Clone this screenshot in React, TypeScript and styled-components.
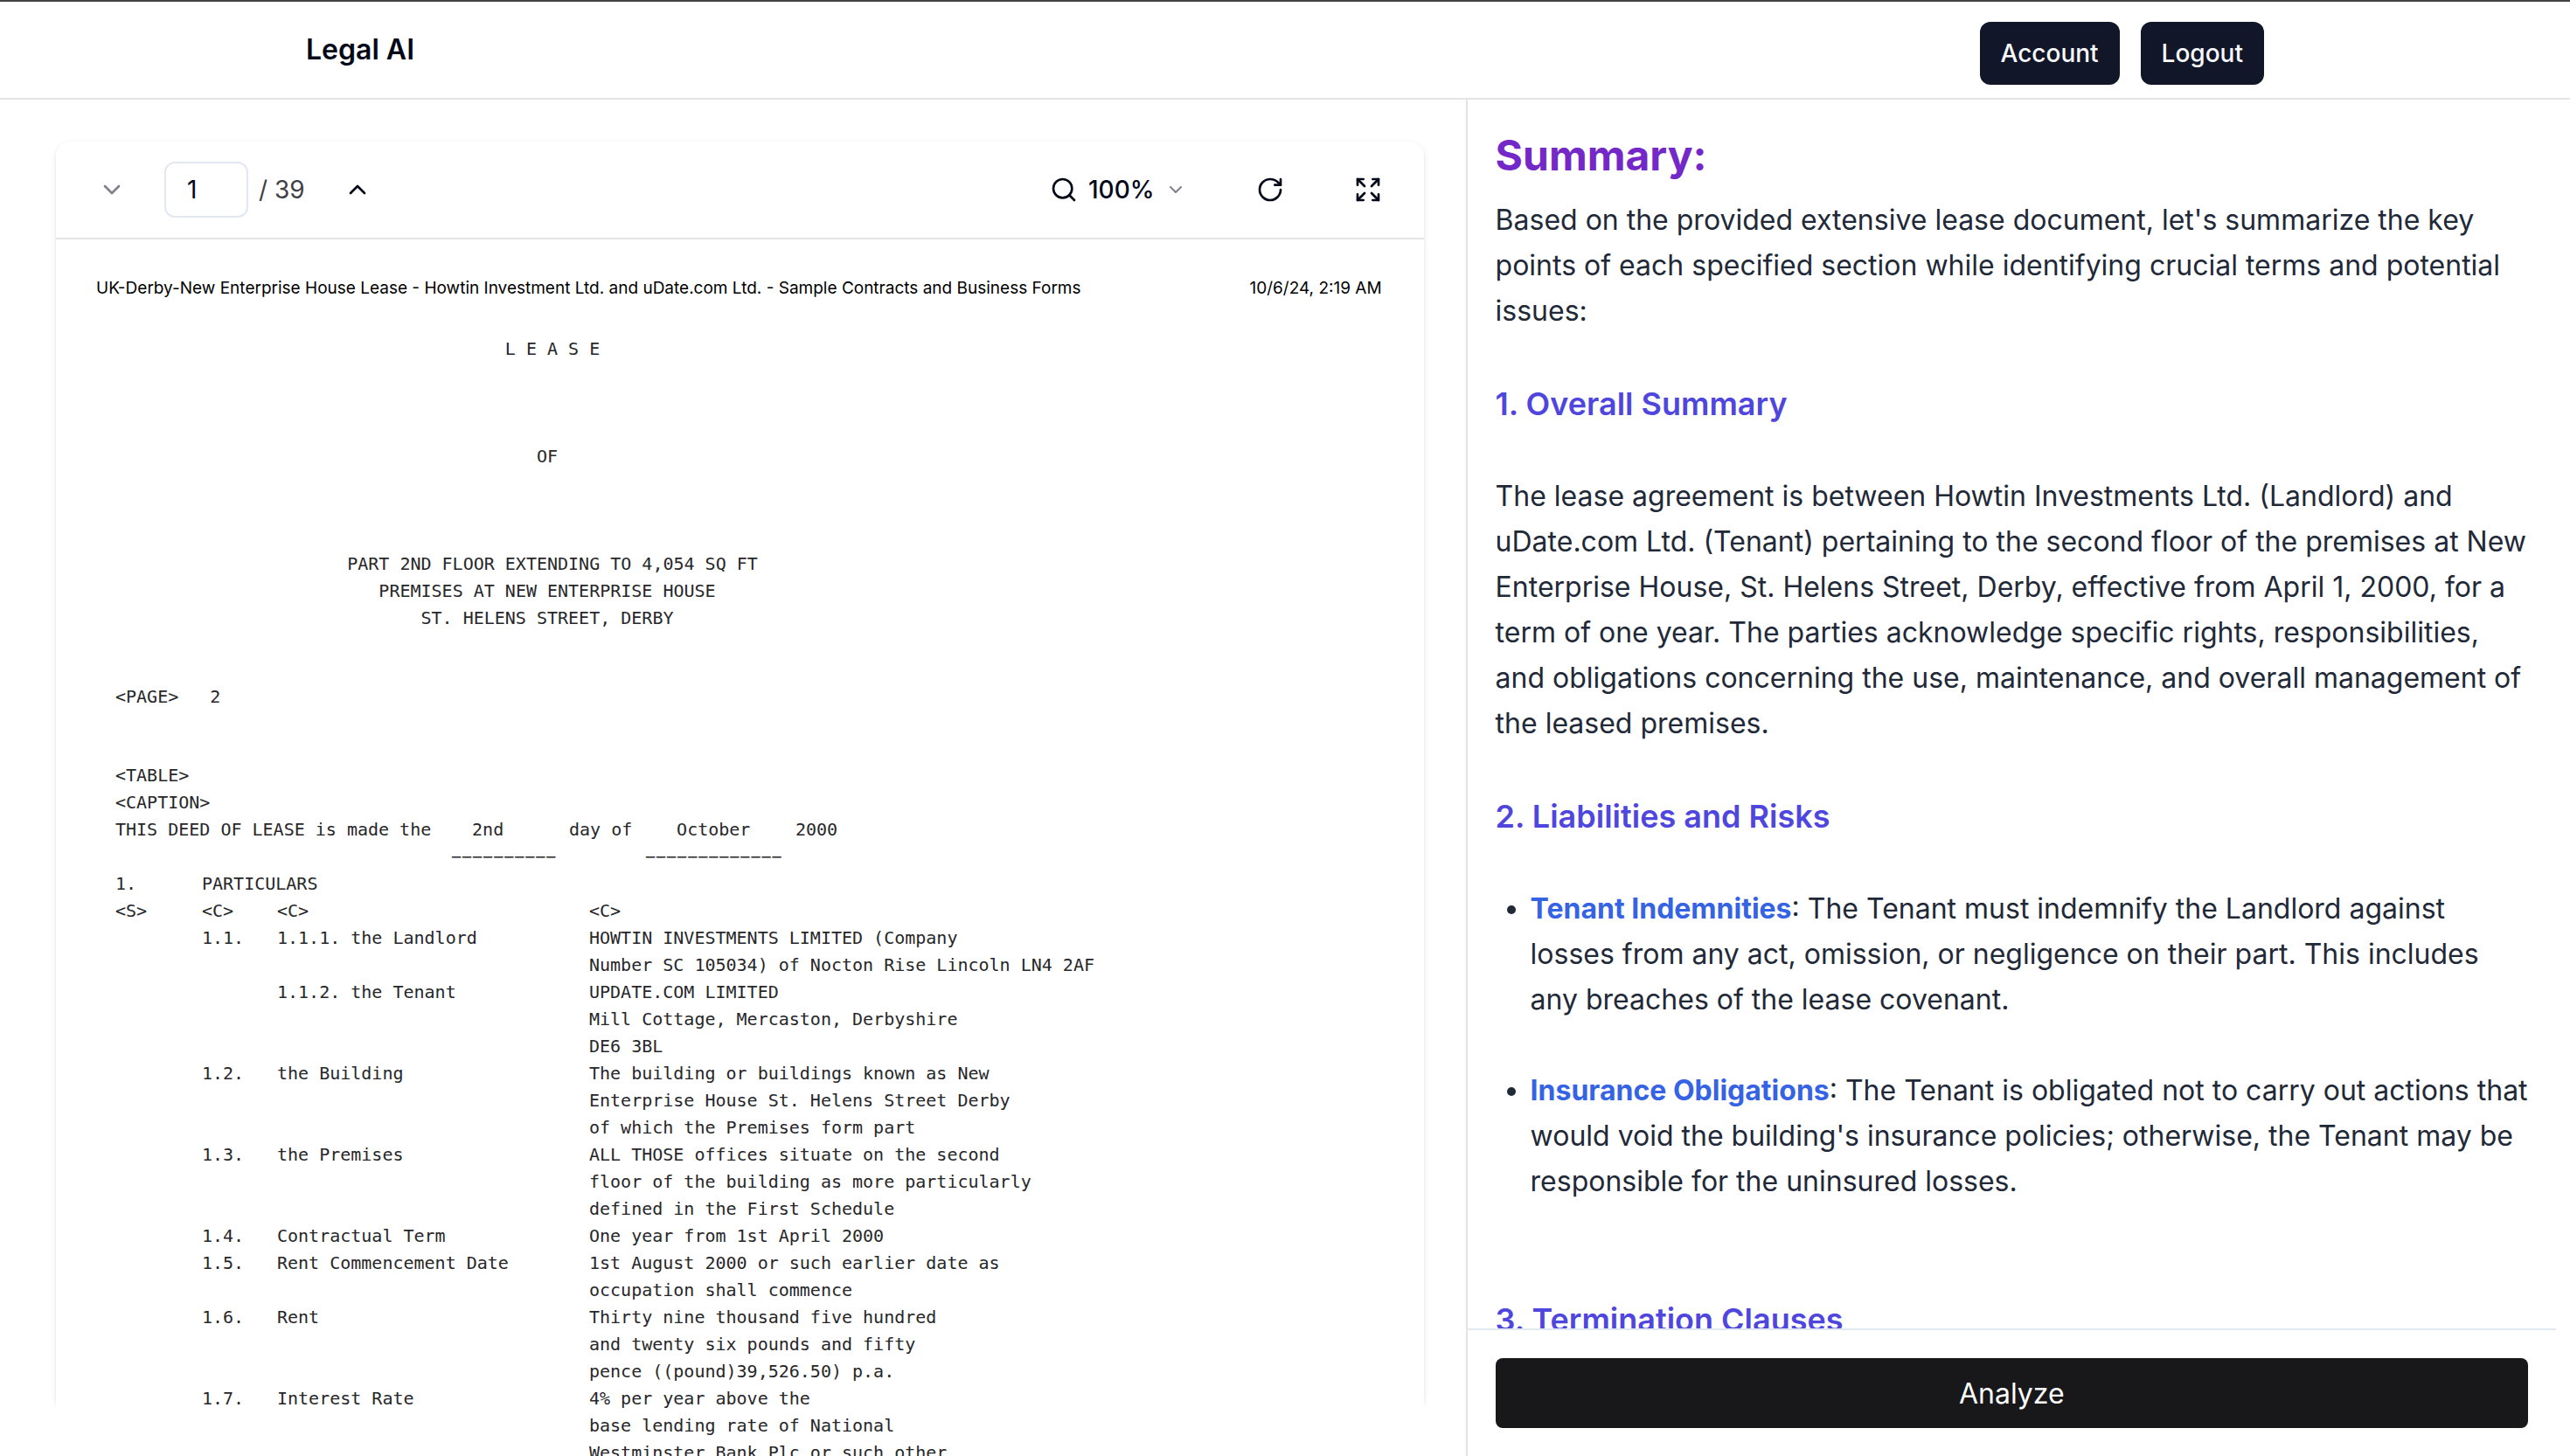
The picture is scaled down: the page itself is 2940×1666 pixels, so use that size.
import React from "react";
import styled, { createGlobalStyle } from "styled-components";
import {
  ChevronDown,
  ChevronUp,
  Expand,
  RotateCw,
  Search,
} from "lucide-react";

const sans = `Inter, "Liberation Sans", sans-serif`;
const mono = `"DejaVu Sans Mono", "Liberation Mono", monospace`;

const GlobalStyle = createGlobalStyle`
  *, *::before, *::after { box-sizing: border-box; }
  html, body { margin: 0; height: 100%; }
  #root { height: 100%; }
  body { background: #fff; color: #020817; font-family: ${sans}; }
  h1, h2, p, ul { margin: 0; padding: 0; }
  button, input { font: inherit; color: inherit; }
`;

const Page = styled.div`
  display: flex;
  flex-direction: column;
  height: 100vh;
  overflow: hidden;
  border-top: 2px solid #444;
`;

const Header = styled.header`
  flex: none;
  border-bottom: 2px solid #e4e4e7;
`;

const HeaderInner = styled.div`
  display: flex;
  align-items: center;
  justify-content: space-between;
  max-width: 2240px;
  height: 110px;
  margin: 0 auto;
`;

const Brand = styled.a`
  font-size: 32px;
  line-height: 48px;
  font-weight: 600;
  color: #020817;
  text-decoration: none;
`;

const HeaderActions = styled.nav`
  display: flex;
  gap: 24px;
  padding-top: 8px;
`;

const NavButton = styled.button`
  height: 72px;
  padding: 0 24px;
  border: 0;
  border-radius: 12px;
  background: #111628;
  color: #f8fafc;
  font-size: 28px;
  font-weight: 500;
`;

const Main = styled.main`
  flex: 1;
  min-height: 0;
  display: grid;
  grid-template-columns: minmax(0, 31fr) minmax(0, 23fr);
  padding-right: 16px;
`;

const ViewerPane = styled.section`
  min-height: 0;
  padding: 48px 48px 0 64px;
  border-right: 2px solid #e4e4e7;
  overflow: hidden;
`;

const ViewerCard = styled.div`
  border-radius: 16px;
  height: calc(100% - 52px);
  box-shadow: 0 2px 6px rgba(0, 0, 0, 0.1), 0 2px 4px -2px rgba(0, 0, 0, 0.1);
`;

const Toolbar = styled.div`
  display: flex;
  align-items: center;
  justify-content: space-between;
  height: 112px;
  padding: 0 16px;
  border-bottom: 2px solid #e4e4e7;
`;

const ToolGroup = styled.div<{ $gap: number }>`
  display: flex;
  align-items: center;
  gap: ${(p) => p.$gap}px;
`;

const IconButton = styled.button`
  display: flex;
  align-items: center;
  justify-content: center;
  gap: 12px;
  height: 80px;
  padding: 0 32px;
  border: 0;
  background: none;
  font-size: 28px;
  font-weight: 500;

  &:disabled {
    opacity: 0.5;
  }
`;

const PageField = styled.label`
  display: flex;
  align-items: center;
  gap: 12px;
  font-size: 28px;
  color: #3f3f46;
`;

const PageInput = styled.input`
  width: 96px;
  height: 64px;
  padding: 0 24px;
  border: 2px solid #e2e8f0;
  border-radius: 12px;
  background: #fff;
  color: #020817;
`;

const Sheet = styled.article`
  padding: 42px 48px 0 46px;
  background: #fff;
`;

const SheetHeader = styled.header`
  display: flex;
  justify-content: space-between;
  font-size: 19px;
  line-height: 28px;
  color: #000;
`;

const SheetBody = styled.div`
  padding: 40px 0 0 22px;
  font-family: ${mono};
  font-size: 20px;
  line-height: 31px;
  color: #27272a;
  white-space: pre;
`;

const TitleBlock = styled.div`
  display: grid;
  gap: 92px;
  width: 988px;
  text-align: center;
`;

const Markup = styled.p`
  padding-top: 59px;
`;

const DeedGrid = styled.div`
  display: grid;
  grid-template-columns: 384px 135px 87px 172px auto;
  justify-content: start;
`;

const Particulars = styled.table`
  width: 100%;
  border-collapse: collapse;
  table-layout: fixed;

  td {
    padding: 0;
    vertical-align: top;
  }
`;

const Column = styled.col<{ $width?: number }>`
  width: ${(p) => (p.$width ? `${p.$width}px` : "auto")};
`;

const SummaryPane = styled.section`
  display: flex;
  flex-direction: column;
  min-height: 0;
`;

const SummaryScroll = styled.div`
  flex: 1;
  min-height: 0;
  overflow: hidden;
  padding: 32px 32px 0;
  font-size: 32px;
  line-height: 52px;
  color: #1f2937;
`;

const SummaryTitle = styled.h1`
  margin-bottom: 16px;
  font-size: 48px;
  line-height: 64px;
  font-weight: 700;
  color: #7428c8;
`;

const SectionTitle = styled.h2`
  margin: 52px 0;
  font-size: 36px;
  line-height: 56px;
  font-weight: 600;
  color: #4f46dd;
`;

const Points = styled.ul`
  display: grid;
  gap: 52px;
  padding-left: 40px;
  margin-bottom: 104px;
`;

const Term = styled.strong`
  font-weight: 700;
  color: #3563e4;
`;

const ActionBar = styled.footer`
  flex: none;
  padding: 32px;
  border-top: 2px solid #e2e8f0;
`;

const AnalyzeButton = styled.button`
  width: 100%;
  height: 80px;
  border: 0;
  border-radius: 8px;
  background: #18181a;
  color: #fff;
  font-size: 32px;
`;

const particulars: [string, string, string, string][] = [
  ["1.", "PARTICULARS", "", ""],
  ["<S>", "<C>", "<C>", "<C>"],
  ["", "1.1.", "1.1.1. the Landlord", "HOWTIN INVESTMENTS LIMITED (Company\nNumber SC 105034) of Nocton Rise Lincoln LN4 2AF"],
  ["", "", "1.1.2. the Tenant", "UPDATE.COM LIMITED\nMill Cottage, Mercaston, Derbyshire\nDE6 3BL"],
  ["", "1.2.", "the Building", "The building or buildings known as New\nEnterprise House St. Helens Street Derby\nof which the Premises form part"],
  ["", "1.3.", "the Premises", "ALL THOSE offices situate on the second\nfloor of the building as more particularly\ndefined in the First Schedule"],
  ["", "1.4.", "Contractual Term", "One year from 1st April 2000"],
  ["", "1.5.", "Rent Commencement Date", "1st August 2000 or such earlier date as\noccupation shall commence"],
  ["", "1.6.", "Rent", "Thirty nine thousand five hundred\nand twenty six pounds and fifty\npence ((pound)39,526.50) p.a."],
  ["", "1.7.", "Interest Rate", "4% per year above the\nbase lending rate of National\nWestminster Bank Plc or such other"],
];

export default function App() {
  return (
    <Page>
      <GlobalStyle />
      <Header>
        <HeaderInner>
          <Brand href="#">Legal AI</Brand>
          <HeaderActions>
            <NavButton>Account</NavButton>
            <NavButton>Logout</NavButton>
          </HeaderActions>
        </HeaderInner>
      </Header>
      <Main>
        <ViewerPane>
          <ViewerCard>
            <Toolbar>
              <ToolGroup $gap={12}>
                <IconButton aria-label="previous page" disabled>
                  <ChevronDown size={32} />
                </IconButton>
                <PageField>
                  <PageInput aria-label="Page number" defaultValue="1" />
                  <span>/ 39</span>
                </PageField>
                <IconButton aria-label="next page">
                  <ChevronUp size={32} />
                </IconButton>
              </ToolGroup>
              <ToolGroup $gap={16}>
                <IconButton aria-label="zoom">
                  <Search size={32} />
                  100%
                  <ChevronDown size={24} opacity={0.5} />
                </IconButton>
                <IconButton aria-label="rotate 90 degrees">
                  <RotateCw size={32} />
                </IconButton>
                <IconButton aria-label="fullscreen">
                  <Expand size={32} />
                </IconButton>
              </ToolGroup>
            </Toolbar>
            <Sheet>
              <SheetHeader>
                <span>
                  UK-Derby-New Enterprise House Lease - Howtin Investment Ltd. and uDate.com Ltd. - Sample Contracts and Business Forms
                </span>
                <time>10/6/24, 2:19 AM</time>
              </SheetHeader>
              <SheetBody>
                <TitleBlock>
                  <p>{" L E A S E"}</p>
                  <p>OF</p>
                  <p>{" PART 2ND FLOOR EXTENDING TO 4,054 SQ FT\nPREMISES AT NEW ENTERPRISE HOUSE\nST. HELENS STREET, DERBY"}</p>
                </TitleBlock>
                <Markup>{"<PAGE>   2"}</Markup>
                <Markup>{"<TABLE>\n<CAPTION>"}</Markup>
                <DeedGrid>
                  <span>THIS DEED OF LEASE is made the</span>
                  <span>{"  2nd"}</span>
                  <span>day of</span>
                  <span>{"   October"}</span>
                  <span>2000</span>
                  <span />
                  <span>−−−−−−−−−−</span>
                  <span />
                  <span>−−−−−−−−−−−−−</span>
                </DeedGrid>
                <Particulars>
                  <colgroup>
                    <Column $width={99} />
                    <Column $width={86} />
                    <Column $width={357} />
                    <Column />
                  </colgroup>
                  <tbody>
                    {particulars.map((row, i) => (
                      <tr key={i}>
                        {row.map((cell, j) => (
                          <td key={j}>{cell}</td>
                        ))}
                      </tr>
                    ))}
                  </tbody>
                </Particulars>
              </SheetBody>
            </Sheet>
          </ViewerCard>
        </ViewerPane>
        <SummaryPane>
          <SummaryScroll>
            <SummaryTitle>Summary:</SummaryTitle>
            <p>
              Based on the provided extensive lease document, let's summarize the key points of each specified section while identifying crucial terms and potential issues:
            </p>
            <SectionTitle>1. Overall Summary</SectionTitle>
            <p>
              The lease agreement is between Howtin Investments Ltd. (Landlord) and uDate.com Ltd. (Tenant) pertaining to the second floor of the premises at New Enterprise House, St. Helens Street, Derby, effective from April 1, 2000, for a term of one year. The parties acknowledge specific rights, responsibilities, and obligations concerning the use, maintenance, and overall management of the leased premises.
            </p>
            <SectionTitle>2. Liabilities and Risks</SectionTitle>
            <Points>
              <li>
                <Term>Tenant Indemnities</Term>: The Tenant must indemnify the Landlord against losses from any act, omission, or negligence on their part. This includes any breaches of the lease covenant.
              </li>
              <li>
                <Term>Insurance Obligations</Term>: The Tenant is obligated not to carry out actions that would void the building's insurance policies; otherwise, the Tenant may be responsible for the uninsured losses.
              </li>
            </Points>
            <SectionTitle>3. Termination Clauses</SectionTitle>
          </SummaryScroll>
          <ActionBar>
            <AnalyzeButton>Analyze</AnalyzeButton>
          </ActionBar>
        </SummaryPane>
      </Main>
    </Page>
  );
}
